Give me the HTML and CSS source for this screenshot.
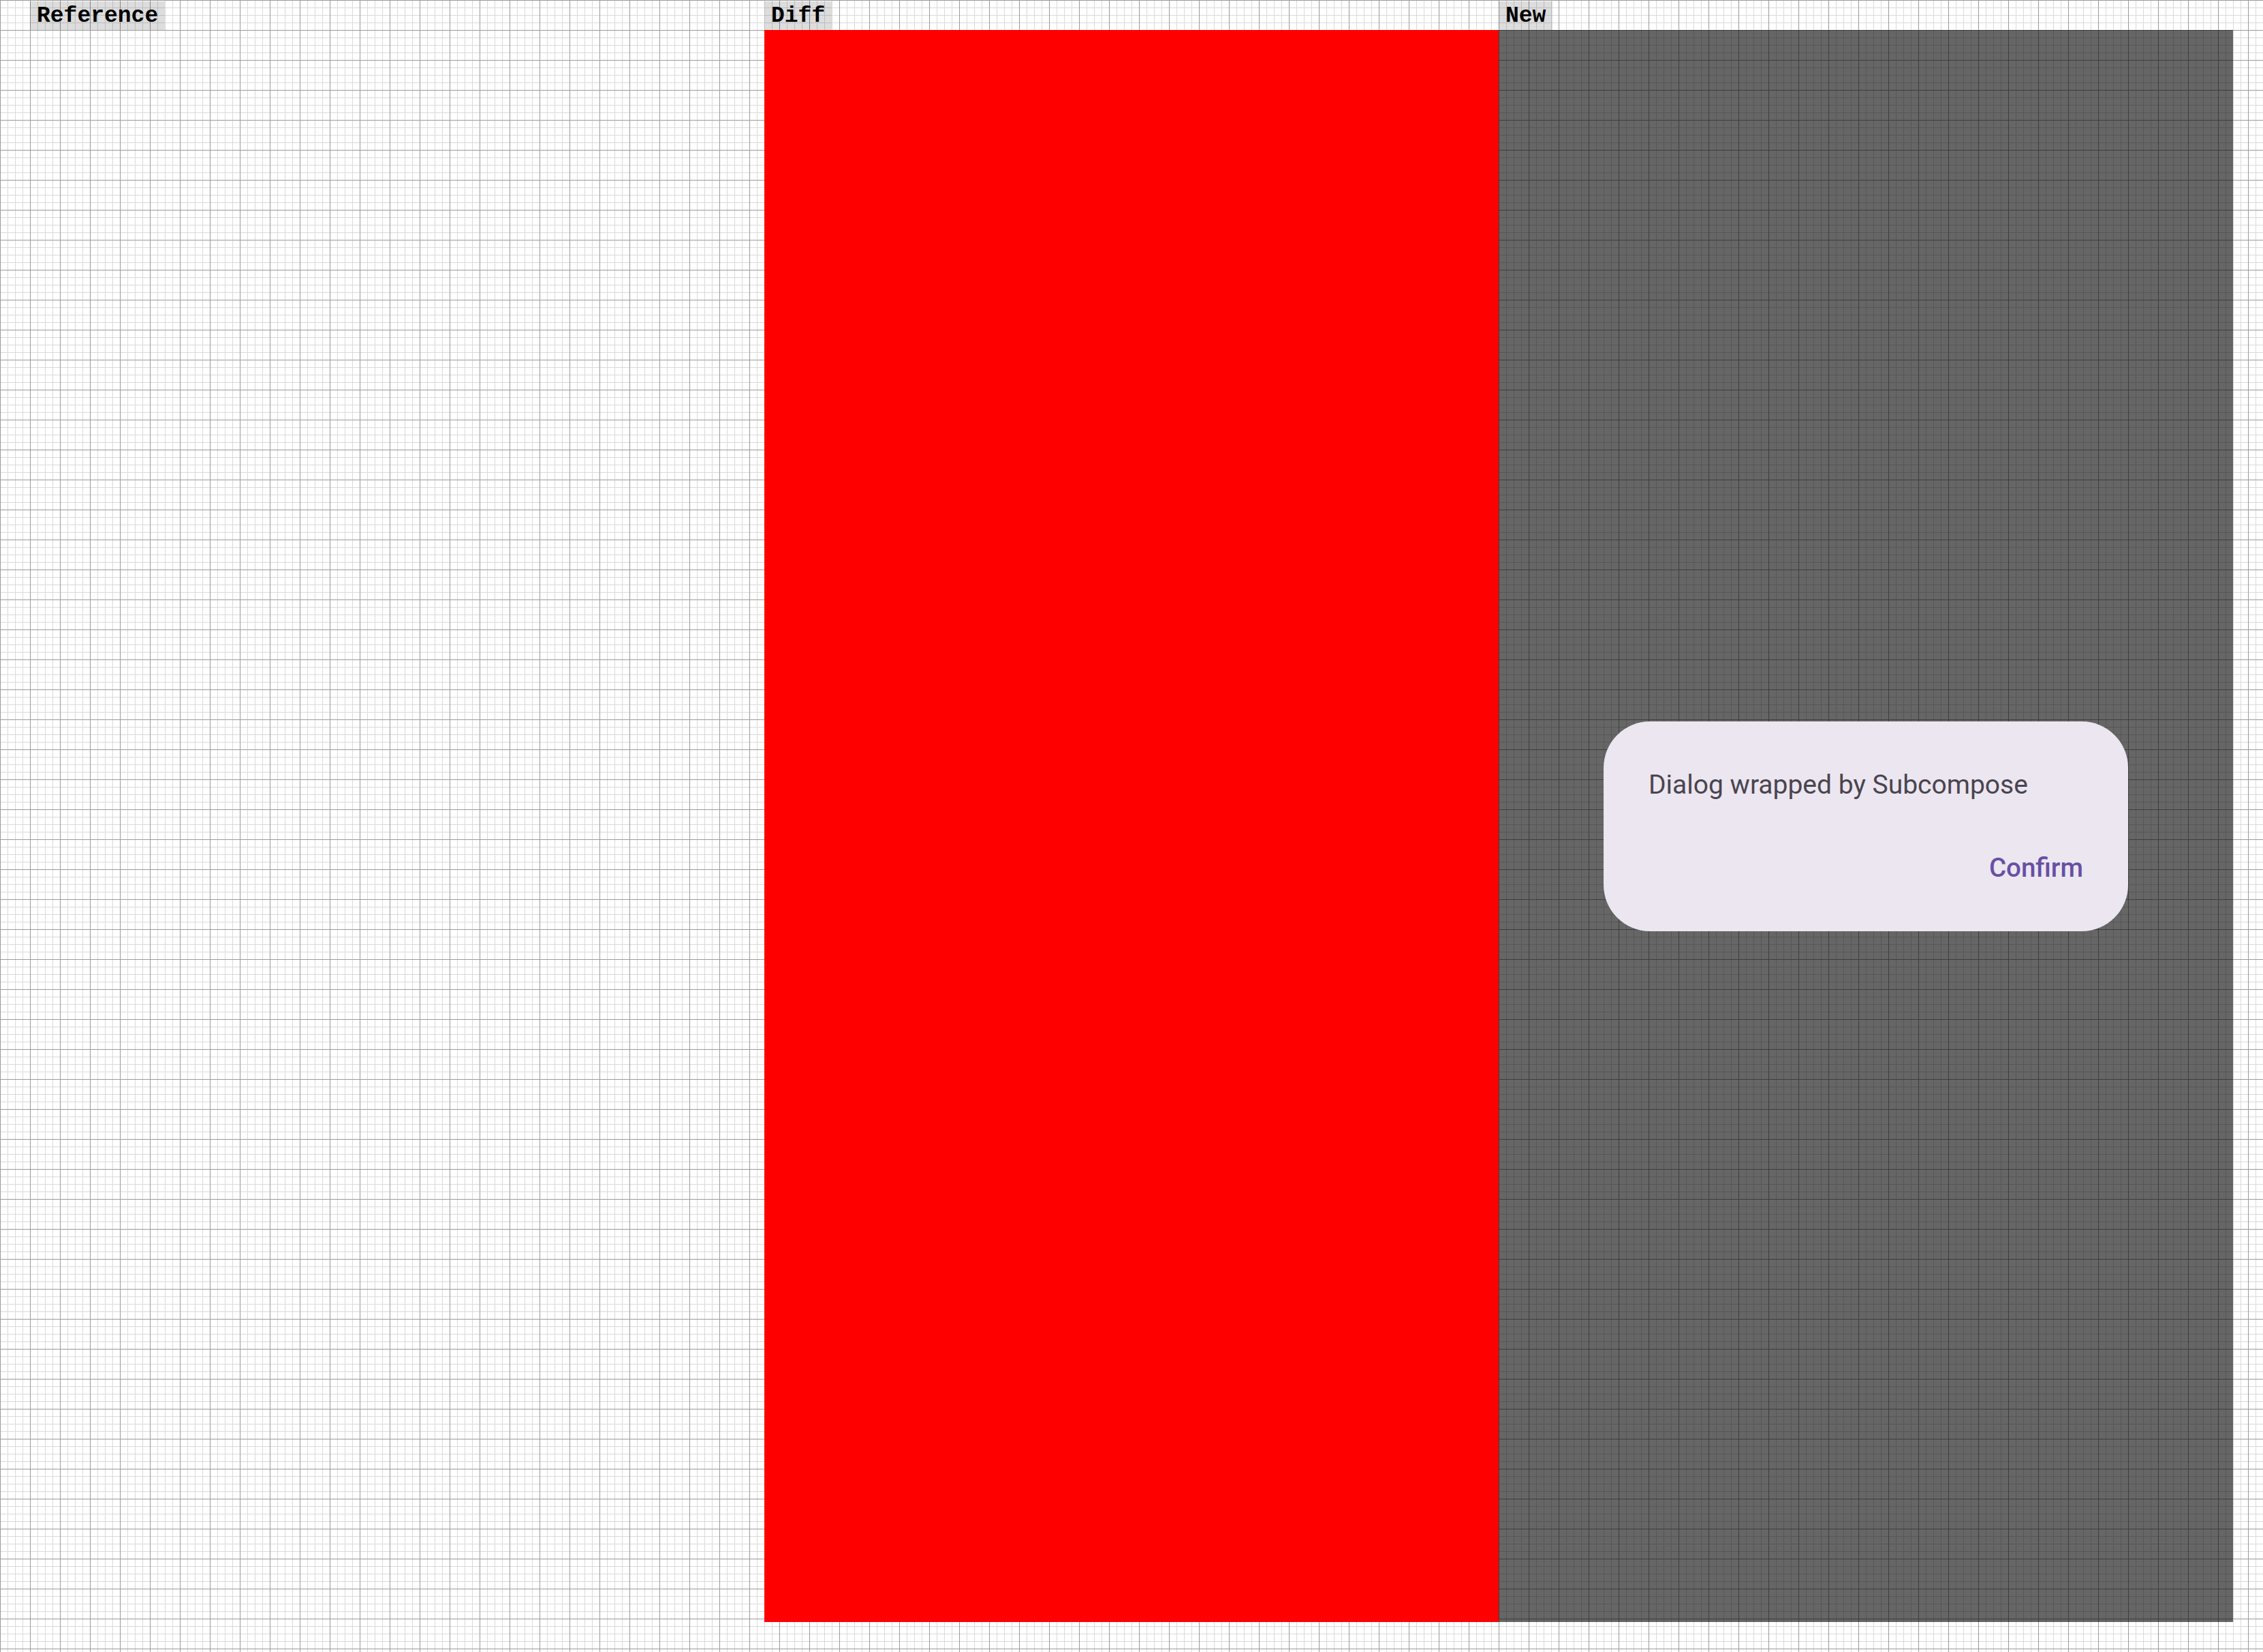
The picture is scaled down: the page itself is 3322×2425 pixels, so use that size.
FILE: index.html
```html
<!DOCTYPE html>
<html lang="en">
<head>
<meta charset="utf-8">
<title>Screenshot comparison</title>
<link rel="stylesheet" href="styles.css">
</head>
<body>
<div class="board">
  <section class="col">
    <div class="label">Reference</div>
    <div class="shot shot-empty"></div>
  </section>
  <section class="col">
    <div class="label">Diff</div>
    <div class="shot shot-diff"></div>
  </section>
  <section class="col">
    <div class="label">New</div>
    <div class="shot shot-new">
      <div class="dialog">
        <div class="dialog-text">Dialog wrapped by Subcompose</div>
        <div class="dialog-actions">
          <span class="dialog-button">Confirm</span>
        </div>
      </div>
    </div>
  </section>
</div>
</body>
</html>
```

FILE: styles.css
```css
html, body {
  margin: 0;
  padding: 0;
}

body {
  width: 3322px;
  height: 2425px;
  overflow: hidden;
  background-color: #ffffff;
  background-image:
    linear-gradient(to right, #9a9a9a 1px, transparent 1px),
    linear-gradient(to bottom, #9a9a9a 1px, transparent 1px),
    linear-gradient(to right, #dadada 1px, transparent 1px),
    linear-gradient(to bottom, #dadada 1px, transparent 1px);
  background-size: 44px 44px, 44px 44px, 11px 11px, 11px 11px;
  background-position: 0 0;
}

.board {
  display: flex;
  padding: 0 44px 44px 44px;
}

.col {
  width: 1078px;
  display: flex;
  flex-direction: column;
  align-items: flex-start;
}

.label {
  margin-top: 2px;
  height: 42px;
  line-height: 43px;
  padding: 0 10px;
  background: rgba(0, 0, 0, 0.135);
  font-family: "Liberation Mono", "Courier New", monospace;
  font-weight: 700;
  font-size: 33px;
  color: #000000;
  white-space: nowrap;
}

.shot {
  width: 1078px;
  height: 2337px;
}

.shot-empty {
  background: transparent;
}

.shot-diff {
  background: #ff0000;
}

.shot-new {
  background: rgba(0, 0, 0, 0.6);
  display: flex;
  align-items: center;
  justify-content: center;
}

.dialog {
  width: 770px;
  box-sizing: border-box;
  padding: 66px;
  background: #ece6f0;
  border-radius: 68px;
  display: flex;
  flex-direction: column;
  gap: 66px;
  font-family: Roboto, "Noto Sans", sans-serif;
}

.dialog-text {
  font-size: 39px;
  line-height: 55px;
  color: #49454f;
}

.dialog-actions {
  display: flex;
  justify-content: flex-end;
}

.dialog-button {
  font-size: 38.5px;
  line-height: 55px;
  font-weight: 500;
  color: #6750a4;
}
```
